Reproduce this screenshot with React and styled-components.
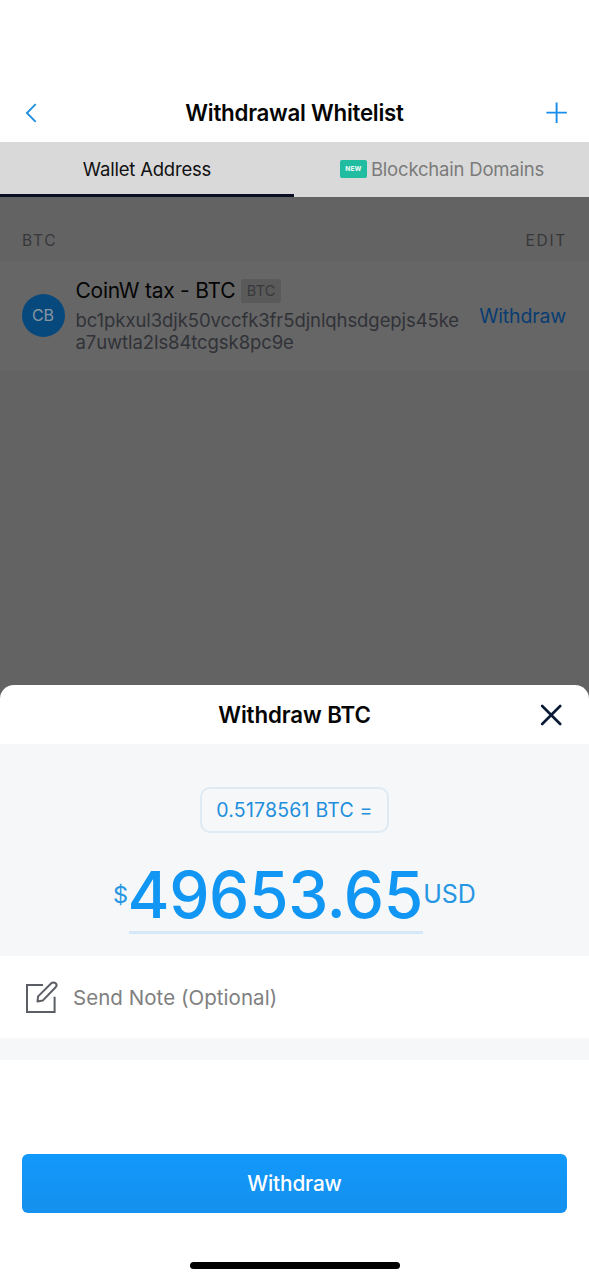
import React from 'react';
import styled, { createGlobalStyle } from 'styled-components';

const GlobalStyle = createGlobalStyle`
  * {
    box-sizing: border-box;
  }
  body {
    margin: 0;
    background: #fff;
    font-family: Inter, "Liberation Sans", sans-serif;
  }
`;

const Screen = styled.div`
  display: flex;
  flex-direction: column;
  width: 589px;
  height: 1280px;
  overflow: hidden;
  background: #636363;
`;

const NavBar = styled.header`
  display: grid;
  grid-template-columns: 60px 1fr 60px;
  align-items: center;
  height: 142px;
  padding-top: 84px;
  background: #fff;
`;

const NavButton = styled.button`
  display: flex;
  justify-content: ${(props) => (props.$right ? 'flex-end' : 'flex-start')};
  padding: 0 ${(props) => (props.$right ? '21px' : '0')} 0 ${(props) => (props.$right ? '0' : '23px')};
  border: none;
  background: none;
`;

const Title = styled.h1`
  margin: 0;
  font-size: 22.3px;
  font-weight: 600;
  line-height: 28px;
  letter-spacing: ${(props) => props.$spacing || '-0.25px'};
  text-align: center;
  white-space: nowrap;
  color: #050505;
`;

const Tabs = styled.nav`
  display: grid;
  grid-template-columns: 294px 295px;
  height: 55px;
  background: #d9d9d9;
`;

const Tab = styled.div`
  display: flex;
  align-items: center;
  justify-content: center;
  gap: 4px;
  padding-top: ${(props) => (props.$active ? '2px' : '0')};
  padding-bottom: ${(props) => (props.$active ? '0' : '1px')};
  padding-left: ${(props) => (props.$active ? '0' : '1px')};
  border-bottom: ${(props) => (props.$active ? '3px solid #0a0f24' : 'none')};
  font-size: 18.5px;
  letter-spacing: -0.2px;
  white-space: nowrap;
  color: ${(props) => (props.$active ? '#111' : '#7b7b7b')};
`;

const NewBadge = styled.span`
  width: 27px;
  height: 18px;
  border-radius: 2px;
  background: #20bda1;
  font-size: 6.5px;
  font-weight: 800;
  line-height: 18px;
  letter-spacing: 0.2px;
  text-align: center;
  color: #e4f7f3;
`;

const SectionHeader = styled.div`
  display: flex;
  justify-content: space-between;
  align-items: center;
  height: 64px;
  padding: 22px 22px 0;
  font-size: 15.5px;
  letter-spacing: 1.7px;
  color: #37373a;
`;

const AddressRow = styled.div`
  display: flex;
  align-items: center;
  height: 109px;
  padding: 0 23px 0 21.5px;
  background: #666;
`;

const Avatar = styled.div`
  flex: none;
  width: 43px;
  height: 43px;
  margin-right: 11px;
  border-radius: 50%;
  background: #08497d;
  font-size: 16px;
  line-height: 43px;
  text-align: center;
  color: #8796a3;
`;

const AddressInfo = styled.div`
  flex: 1;
`;

const NameLine = styled.div`
  display: flex;
  align-items: center;
  gap: 6px;
  height: 26px;
  margin-bottom: 5px;
  font-size: 21px;
  letter-spacing: -0.25px;
  white-space: nowrap;
  color: #050505;
`;

const CoinTag = styled.span`
  width: 40px;
  height: 24px;
  border-radius: 3px;
  background: #5a5a5b;
  font-size: 14.5px;
  line-height: 24px;
  letter-spacing: 0.2px;
  text-align: center;
  color: #38383a;
`;

const Address = styled.div`
  padding-bottom: 1px;
  font-size: 18.5px;
  line-height: 22px;
  letter-spacing: -0.08px;
  white-space: nowrap;
  color: #313238;
`;

const WithdrawLink = styled.div`
  font-size: 19.5px;
  letter-spacing: -0.15px;
  white-space: nowrap;
  color: #083c72;
`;

const Sheet = styled.section`
  display: flex;
  flex-direction: column;
  height: 595px;
  margin-top: auto;
  border-radius: 14px 14px 0 0;
  background: #fff;
`;

const SheetHeader = styled.div`
  display: grid;
  grid-template-columns: 60px 1fr 60px;
  align-items: center;
  height: 59px;
  padding-top: 1px;
`;

const CloseButton = styled.button`
  grid-column: 3;
  display: flex;
  padding: 0 0 0 11px;
  border: none;
  background: none;
`;

const AmountArea = styled.div`
  display: flex;
  flex-direction: column;
  align-items: center;
  height: 212px;
  padding-top: 43px;
  background: #f5f7f9;
  color: #1296f3;
`;

const CryptoAmount = styled.div`
  width: 189px;
  height: 46px;
  border: 2px solid #dfeaf3;
  border-radius: 10px;
  font-size: 19.5px;
  line-height: 43px;
  letter-spacing: 0.2px;
  text-align: center;
  white-space: nowrap;
  color: #1e8fdc;
`;

const FiatAmount = styled.div`
  display: flex;
  margin-top: 22px;
  line-height: 79px;
`;

const Currency = styled.span`
  font-size: ${(props) => (props.$small ? '23.5px' : '25px')};
  color: #2796e3;
`;

const Amount = styled.div`
  width: 294px;
  height: 79px;
  margin-left: 1px;
  border-bottom: 3px solid #d6e7f8;
  font-size: 64px;
  font-weight: 500;
  line-height: 79px;
  letter-spacing: -0.4px;
  text-indent: -2px;
  text-align: center;
  white-space: nowrap;
`;

const NoteRow = styled.div`
  display: flex;
  align-items: center;
  gap: 14px;
  height: 82px;
  padding-left: 24px;
  font-size: 20.5px;
  letter-spacing: 0.05px;
  color: #808080;
`;

const Divider = styled.div`
  height: 22px;
  background: #f5f7f9;
`;

const SubmitButton = styled.button`
  height: 59px;
  margin: 94px 22px 0;
  padding: 0;
  border: none;
  border-radius: 6px;
  background: linear-gradient(#1199fb, #1590ee);
  font-family: inherit;
  font-size: 20.8px;
  font-weight: 500;
  letter-spacing: -0.15px;
  color: #fff;
`;

const HomeIndicator = styled.div`
  align-self: center;
  width: 210px;
  height: 7px;
  margin-top: 49px;
  border-radius: 4px;
  background: #000;
`;

const BackIcon = () => (
  <svg width="16" height="22" viewBox="0 0 16 22" fill="none" stroke="#2290df" strokeWidth="1.9">
    <path d="M12.7 2.2L3.9 11l8.8 8.8" />
  </svg>
);

const PlusIcon = () => (
  <svg width="22" height="22" viewBox="0 0 22 22" fill="none" stroke="#168dec" strokeWidth="1.9">
    <path d="M10.6 .6v20.4M.4 10.6h20.4" />
  </svg>
);

const CloseIcon = () => (
  <svg width="22" height="22" viewBox="0 0 22 22" fill="none" stroke="#0a1a36" strokeWidth="2.6" strokeLinecap="round">
    <path d="M2.2 2l18 18M20.2 2L2.2 20" />
  </svg>
);

const NoteIcon = () => (
  <svg width="35" height="36" viewBox="0 0 35 36" fill="none" stroke="#5b5e64" strokeWidth="2">
    <path d="M19 6H3v27h27.6V17.7" />
    <path d="M14.1 17.4L27.3 4.3c1.2-1.2 3.1-1.2 4.3 0s1.2 2.8 0 4L18.7 21.6l-5.2 1z" strokeLinejoin="round" />
  </svg>
);

const App = () => (
  <>
    <GlobalStyle />
    <Screen>
      <NavBar>
        <NavButton type="button" aria-label="Back"><BackIcon /></NavButton>
        <Title>Withdrawal Whitelist</Title>
        <NavButton type="button" aria-label="Add" $right><PlusIcon /></NavButton>
      </NavBar>
      <Tabs>
        <Tab $active>Wallet Address</Tab>
        <Tab>
          <NewBadge>NEW</NewBadge>
          Blockchain Domains
        </Tab>
      </Tabs>
      <SectionHeader>
        <span>BTC</span>
        <span>EDIT</span>
      </SectionHeader>
      <AddressRow>
        <Avatar>CB</Avatar>
        <AddressInfo>
          <NameLine>
            CoinW tax - BTC
            <CoinTag>BTC</CoinTag>
          </NameLine>
          <Address>
            bc1pkxul3djk50vccfk3fr5djnlqhsdgepjs45ke
            <br />
            a7uwtla2ls84tcgsk8pc9e
          </Address>
        </AddressInfo>
        <WithdrawLink>Withdraw</WithdrawLink>
      </AddressRow>
      <Sheet>
        <SheetHeader>
          <span />
          <Title $spacing="-0.1px">Withdraw BTC</Title>
          <CloseButton type="button" aria-label="Close"><CloseIcon /></CloseButton>
        </SheetHeader>
        <AmountArea>
          <CryptoAmount>0.5178561 BTC =</CryptoAmount>
          <FiatAmount>
            <Currency $small>$</Currency>
            <Amount>49653.65</Amount>
            <Currency>USD</Currency>
          </FiatAmount>
        </AmountArea>
        <NoteRow>
          <NoteIcon />
          Send Note (Optional)
        </NoteRow>
        <Divider />
        <SubmitButton type="button">Withdraw</SubmitButton>
        <HomeIndicator />
      </Sheet>
    </Screen>
  </>
);

export default App;
